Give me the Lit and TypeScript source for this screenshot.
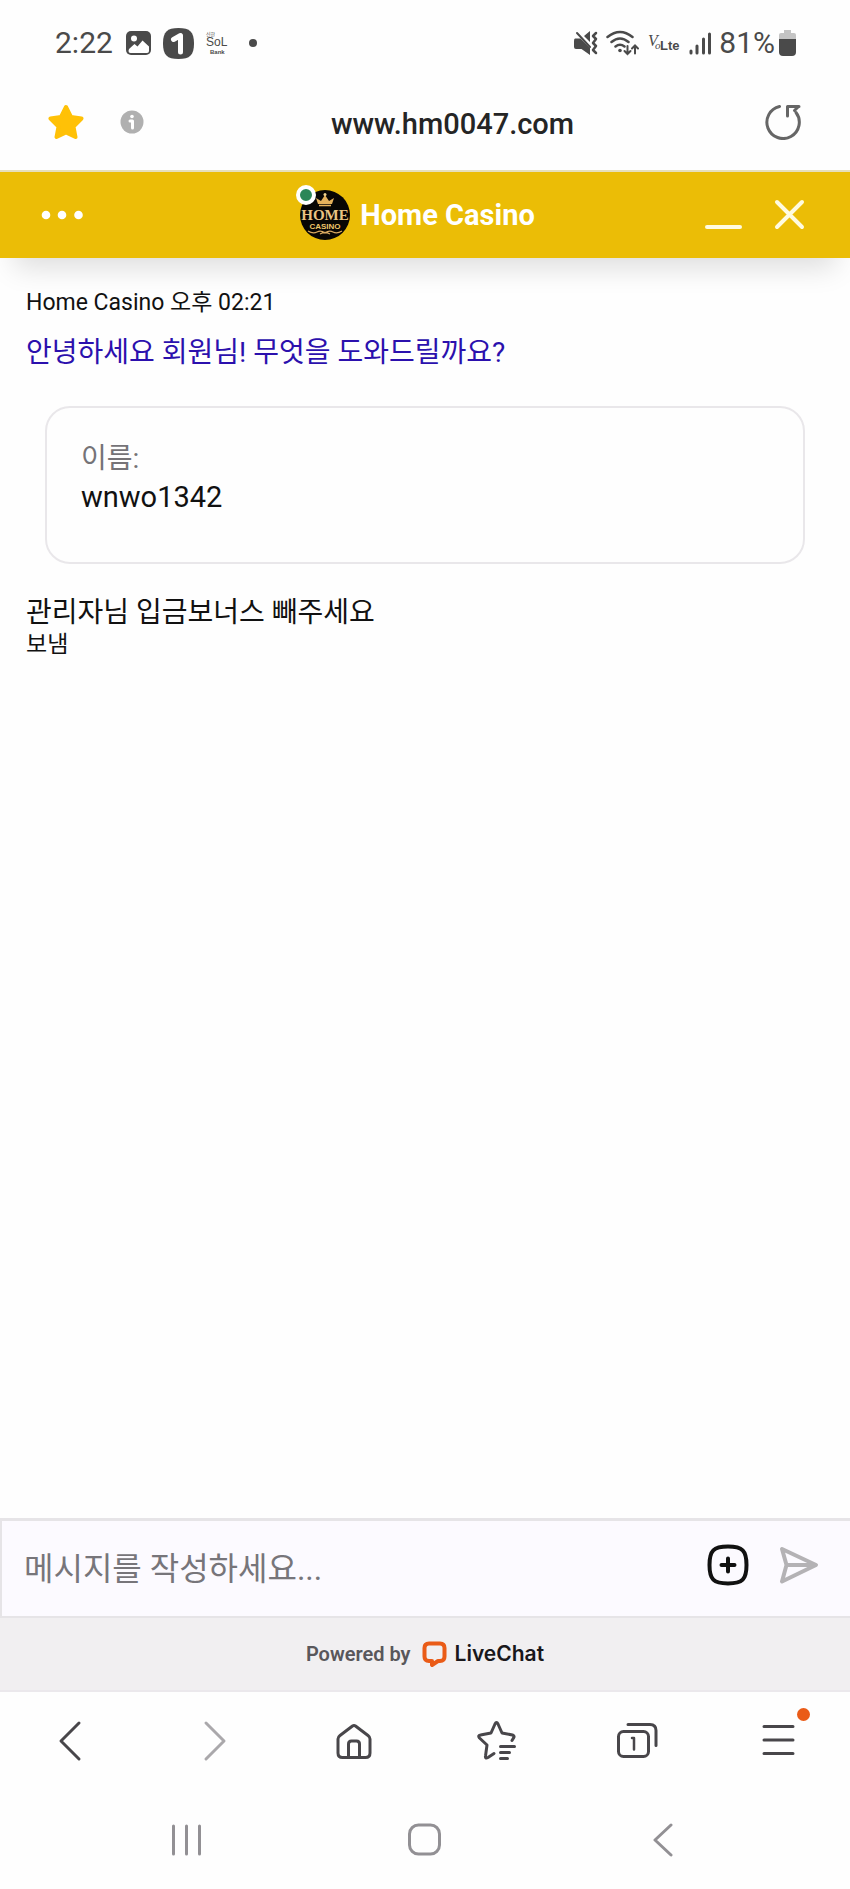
import { LitElement, html, css, svg } from "lit";
import { customElement, property, state } from "lit/decorators.js";

const sans = css`Roboto, "Noto Sans CJK KR", sans-serif`;

const control = css`
  button {
    display: flex;
    align-items: center;
    justify-content: center;
    margin: 0;
    padding: 0;
    border: 0;
    background: transparent;
    color: inherit;
    font: inherit;
    cursor: pointer;
  }
  svg {
    display: block;
    flex: none;
  }
`;

@customElement("phone-status")
class PhoneStatus extends LitElement {
  static styles = css`
    :host {
      display: flex;
      align-items: center;
      justify-content: space-between;
      height: 86px;
      padding: 0 54px 0 55px;
      color: #4a4a4a;
      font: 400 30px/40px ${sans};
    }
    .group {
      display: flex;
      align-items: center;
      gap: 11px;
    }
    .group.right {
      gap: 7px;
    }
    .battery {
      display: flex;
      align-items: center;
      gap: 4px;
    }
    svg {
      display: block;
      flex: none;
    }
    .sol {
      font: 400 12px "Liberation Sans", sans-serif;
    }
    .small {
      font: 700 6px "Liberation Sans", sans-serif;
    }
    .tiny {
      font: 400 5px "Noto Sans CJK KR", sans-serif;
    }
    .vo {
      font: italic 400 16px "Liberation Serif", serif;
    }
    .o {
      font: italic 400 11px "Liberation Serif", serif;
    }
    .lte {
      font: 700 13px "Liberation Sans", sans-serif;
    }
  `;

  @property() time = "";
  @property({ type: Number }) charge = 0;

  render() {
    return html`
      <div class="group">
        <span>${this.time}</span>
        <svg width="28" height="26" viewBox="0 0 28 26">
          <rect x="2" y="1" width="25" height="24" rx="5" fill="currentColor" />
          <circle cx="10" cy="8.500" r="3" fill="#fff" />
          <path d="M5 19l5.500-5 3 2.500 5-6 6.500 6v4.500q0 2-2 2H6.500q-2 0-2-2z" fill="#fff" />
        </svg>
        <svg width="31" height="31" viewBox="0 0 31 31">
          <path d="M15.500 0C27 0 31 4 31 15.500S27 31 15.500 31 0 27 0 15.500 4 0 15.500 0z" fill="currentColor" />
          <path d="M10.500 11.500L17.500 7.500V24" fill="none" stroke="#fff" stroke-width="5" stroke-linecap="round" stroke-linejoin="round" />
        </svg>
        <svg width="24" height="28" viewBox="0 0 24 28">
          <g fill="currentColor">
            <text class="tiny" x="1" y="7">신한</text>
            <text class="sol" x="1" y="17">SoL</text>
            <text class="small" x="5" y="25">Bank</text>
          </g>
        </svg>
        <svg width="20" height="10" viewBox="0 0 20 10">
          <circle cx="13" cy="5" r="4" fill="currentColor" />
        </svg>
      </div>
      <div class="group right">
        <svg width="25" height="26" viewBox="0 0 25 26" fill="none" stroke="currentColor" stroke-width="2" stroke-linecap="round">
          <path d="M1 8.500h5.500L16 18v7l-8.500-6H2q-2 0-2-2v-6q0-2.500 1-2.500zM10 6l6-5v11z" fill="currentColor" stroke="none" />
          <path d="M3 3l13 14" />
          <path d="M22 3l-3 3 3 3-3 4 3 3-3 4 3 3" stroke-width="2.500" stroke-linejoin="round" />
        </svg>
        <svg width="34" height="26" viewBox="0 0 34 26" fill="none" stroke="currentColor" stroke-width="2.500" stroke-linecap="round">
          <path d="M1.500 7q12.500-10 25 0M5.500 12q8.500-7 17 0M9.500 16.500q4.500-3.500 9 0" />
          <circle cx="14" cy="20.500" r="1.800" fill="currentColor" stroke="none" />
          <path d="M21.500 16v8M18.500 21l3 3 3-3M29 23.500v-8M26 18.500l3-3 3 3" stroke-width="2" />
        </svg>
        <svg width="34" height="30" viewBox="0 0 34 30">
          <g fill="currentColor">
            <text class="vo" x="1" y="18">V</text>
            <text class="o" x="8" y="21">o</text>
            <text class="lte" x="13" y="22">Lte</text>
          </g>
        </svg>
        <svg width="24" height="26" viewBox="0 0 24 26" stroke="currentColor" stroke-width="3" stroke-linecap="round">
          <path d="M3 21v2M9 16v7M15.500 9v14M21.500 4v19" />
        </svg>
        <span class="battery">
          <span>${this.charge}%</span>
          <svg width="17" height="26" viewBox="0 0 17 26">
            <path d="M5 0h7v3h3q2 0 2 2v4H0V5q0-2 2-2h3z" fill="#c4c4c4" />
            <path d="M0 9h17v13q0 4-4 4H4q-4 0-4-4z" fill="currentColor" />
          </svg>
        </span>
      </div>
    `;
  }
}

@customElement("address-bar")
class AddressBar extends LitElement {
  static styles = [
    control,
    css`
      :host {
        display: flex;
        align-items: center;
        height: 84px;
        padding: 0 45px 12px 48px;
        box-sizing: border-box;
      }
      .info {
        margin-left: 36px;
      }
      .reload {
        padding: 4px;
      }
      input {
        flex: 1;
        min-width: 0;
        padding: 4px 0 0;
        border: 0;
        outline: 0;
        background: transparent;
        color: #252525;
        font: 500 29px/40px ${sans};
        text-align: center;
      }
    `,
  ];

  @property() url = "";

  render() {
    return html`
      <button aria-label="Bookmark">
        <svg width="36" height="36" viewBox="0 0 36 36">
          <path d="M18 3l5 10 10.500 1.500-8 8L27.500 33 18 28.500 8.500 33l2-10.500-8-8L13 13z" fill="#ffc107" stroke="#ffc107" stroke-width="4" stroke-linejoin="round" />
        </svg>
      </button>
      <button class="info" aria-label="Site information">
        <svg width="24" height="24" viewBox="0 0 24 24">
          <circle cx="12" cy="12" r="11.500" fill="#b0b0b0" />
          <circle cx="12" cy="6.500" r="1.800" fill="#fff" />
          <path d="M10 11h2.500v7" fill="none" stroke="#fff" stroke-width="3" stroke-linecap="round" stroke-linejoin="round" />
        </svg>
      </button>
      <input type="text" aria-label="Address" .value=${this.url} />
      <button class="reload" aria-label="Reload">
        <svg width="36" height="36" viewBox="0 0 36 36" fill="none" stroke="#666" stroke-width="3" stroke-linecap="round" stroke-linejoin="round">
          <path d="M14.500 2.500A16.200 16.200 0 1 0 31 8.500" />
          <path d="M34 2.500H22.500V12M33 3l-3.500 3.500" />
        </svg>
      </button>
    `;
  }
}

@customElement("chat-header")
class ChatHeader extends LitElement {
  static styles = [
    control,
    css`
      :host {
        display: grid;
        grid-template-columns: 1fr auto 1fr;
        align-items: center;
        height: 88px;
        padding: 0 44px 0 39px;
        box-sizing: border-box;
        border-top: 2px solid #e6dfbc;
        background: #ebbd06;
        box-shadow: 0 24px 28px -14px rgba(0, 0, 0, 0.13);
        color: #fff;
      }
      .menu {
        justify-self: start;
      }
      .title {
        display: flex;
        align-items: center;
        gap: 10px;
        padding-right: 10px;
      }
      .avatar {
        position: relative;
      }
      .online {
        position: absolute;
        top: -5px;
        left: -4px;
        width: 12px;
        height: 12px;
        border: 4px solid #fff;
        border-radius: 50%;
        background: #2b8658;
      }
      h1 {
        margin: 0;
        font: 700 29px/36px ${sans};
      }
      .home {
        font: 700 15px "Liberation Serif", serif;
      }
      .casino {
        font: 700 8px "Liberation Sans", sans-serif;
      }
      .actions {
        display: flex;
        justify-content: flex-end;
        gap: 30px;
      }
    `,
  ];

  @property() name = "";

  render() {
    return html`
      <button class="menu" aria-label="Menu">
        <svg width="46" height="36" viewBox="0 0 46 36" fill="#fff">
          <circle cx="7" cy="18" r="4.300" />
          <circle cx="23" cy="18" r="4.300" />
          <circle cx="39.500" cy="18" r="4.300" />
        </svg>
      </button>
      <div class="title">
        <div class="avatar">
          <svg width="50" height="50" viewBox="0 0 50 50">
            <circle cx="25" cy="25" r="25" fill="#080604" />
            <path d="M18 14l-2-6 5 3 4-6 4 6 5-3-2 6z" fill="#e5b15c" />
            <circle cx="25" cy="4.500" r="1.500" fill="#f3d48d" />
            <path d="M19 15.500h12" stroke="#e5b15c" stroke-width="1.500" />
            <g text-anchor="middle">
              <text class="home" x="25" y="30" fill="#e9c383">HOME</text>
              <text class="casino" x="25" y="39" fill="#efc66a">CASINO</text>
            </g>
            <path d="M8 41q5 3 9 1t8 1q4-3 8-1t9-1M20 44q5-3 10 0" fill="none" stroke="#d9a960" stroke-width="1.300" />
          </svg>
          <span class="online"></span>
        </div>
        <h1>${this.name}</h1>
      </div>
      <div class="actions">
        <button aria-label="Minimize">
          <svg width="38" height="36" viewBox="0 0 38 36" stroke="#fffbe0" stroke-width="4" stroke-linecap="round">
            <path d="M3 30h33" />
          </svg>
        </button>
        <button aria-label="Close">
          <svg width="34" height="36" viewBox="0 0 34 36" stroke="#fffbe0" stroke-width="4" stroke-linecap="round">
            <path d="M5 5l25 25M30 5L5 30" />
          </svg>
        </button>
      </div>
    `;
  }
}

@customElement("chat-composer")
class ChatComposer extends LitElement {
  static styles = [
    control,
    css`
      form {
        display: flex;
        align-items: center;
        gap: 29px;
        height: 100px;
        padding: 0 30px 0 22px;
        box-sizing: border-box;
        border: solid #e6e4e7;
        border-width: 3px 0 2px 2px;
        background: #fcfaff;
      }
      input {
        flex: 1;
        min-width: 0;
        padding: 0;
        border: 0;
        outline: 0;
        background: transparent;
        color: #111;
        font: 400 32px/44px ${sans};
      }
      input::placeholder {
        color: #77757a;
        opacity: 1;
      }
      button svg {
        margin-bottom: 8px;
      }
    `,
  ];

  @state() private text = "";

  onInput(e: InputEvent) {
    this.text = (e.target as HTMLInputElement).value;
  }

  onSubmit(e: Event) {
    e.preventDefault();
    if (this.text === "") {
      return;
    }
    this.dispatchEvent(
      new CustomEvent("send", { detail: this.text, bubbles: true, composed: true })
    );
    this.text = "";
  }

  render() {
    return html`
      <form @submit=${this.onSubmit}>
        <input
          type="text"
          aria-label="메시지"
          placeholder="메시지를 작성하세요..."
          .value=${this.text}
          @input=${this.onInput}
        />
        <button type="button" aria-label="Attach">
          <svg width="42" height="42" viewBox="0 0 42 42" fill="none" stroke="#111" stroke-width="4" stroke-linecap="round">
            <path d="M21 2.500C35.500 2.500 39.500 6.500 39.500 21S35.500 39.500 21 39.500 2.500 35.500 2.500 21 6.500 2.500 21 2.500z" />
            <path d="M21 14.500v13M14.500 21h13" />
          </svg>
        </button>
        <button aria-label="Send">
          <svg width="42" height="42" viewBox="0 0 42 42" fill="none" stroke="#b4b2b5" stroke-width="4" stroke-linecap="round" stroke-linejoin="round">
            <path d="M4 5L38 21 4 37.500 8.500 21zM8.500 21H36" />
          </svg>
        </button>
      </form>
    `;
  }
}

const toolbar = [
  { label: "Back", icon: svg`<path d="M31 5L13 23l18 18" />` },
  { label: "Forward", icon: svg`<path d="M17 5l18 18-18 18" />`, dim: true },
  {
    label: "Home",
    icon: svg`<path d="M7 21q0-2 2-3.500L21.500 8q1.500-1 3 0L37 17.500q2 1.500 2 3.500v14q0 4.500-4.500 4.500h-23Q7 39.500 7 35z" /><path d="M17.500 39V26q0-3 3-3h5q3 0 3 3v13" />`,
  },
  {
    label: "Bookmarks",
    icon: svg`<path d="M21 35.500l-6 4q-3 1.500-2.500-1.500l1.500-11-7.500-7q-2-2.500 1-3l10.500-2L22 6q1.500-3 3 0l4 9 10.500 2q2.500 1 1 3l-1.500 2.500M27.500 28.500h14M27.500 34.500h9M27.500 40.500h7" />`,
  },
  {
    label: "Tabs",
    icon: svg`<rect x="4.500" y="13.500" width="30" height="25" rx="5" /><path d="M14 6.500h22q6 0 6 6v15" /><path d="M18 20h2v11.500" stroke-width="2.500" />`,
  },
  { label: "Menu", icon: svg`<path d="M8 8.500h29M8 22h29M8 35.500h29" />`, badge: true },
];

@customElement("browser-toolbar")
class BrowserToolbar extends LitElement {
  static styles = [
    control,
    css`
      :host {
        display: block;
        color: #48464a;
      }
      nav {
        display: grid;
        grid-template-columns: repeat(6, 1fr);
        align-items: center;
        height: 97px;
      }
      nav button {
        height: 97px;
      }
      .icon {
        position: relative;
      }
      .dim {
        color: #aaa8ab;
      }
      .badge {
        position: absolute;
        top: -10px;
        right: -8px;
        width: 13px;
        height: 13px;
        border-radius: 50%;
        background: #ea5b17;
      }
      .system {
        grid-template-columns: repeat(3, 1fr);
        height: 100px;
        padding: 0 68px;
        color: #929094;
      }
    `,
  ];

  render() {
    return html`
      <nav aria-label="Browser">
        ${toolbar.map(
          (item) => html`<button class=${item.dim ? "dim" : ""} aria-label=${item.label}>
            <span class="icon">
              <svg width="46" height="46" viewBox="0 0 46 46" fill="none" stroke="currentColor" stroke-width="3" stroke-linecap="round" stroke-linejoin="round">
                ${item.icon}
              </svg>
              ${item.badge ? html`<span class="badge"></span>` : ""}
            </span>
          </button>`
        )}
      </nav>
      <nav class="system" aria-label="System">
        <button aria-label="Recents">
          <svg width="36" height="36" viewBox="0 0 36 36" stroke="currentColor" stroke-width="3" stroke-linecap="round">
            <path d="M4.500 5v28M17.500 5v28M30.500 5v28" />
          </svg>
        </button>
        <button aria-label="Home screen">
          <svg width="36" height="36" viewBox="0 0 36 36" fill="none" stroke="currentColor" stroke-width="3">
            <rect x="2.500" y="4" width="30" height="29" rx="9" />
          </svg>
        </button>
        <button aria-label="Go back">
          <svg width="36" height="36" viewBox="0 0 36 36" fill="none" stroke="currentColor" stroke-width="3" stroke-linecap="round" stroke-linejoin="round">
            <path d="M26 4L10 19l16 15" />
          </svg>
        </button>
      </nav>
    `;
  }
}

@customElement("app-root")
class AppRoot extends LitElement {
  static styles = css`
    :host {
      display: flex;
      flex-direction: column;
      min-height: 100vh;
      background: #fefefe;
      color: #111;
      font: 400 28px/38px ${sans};
    }
    main {
      flex: 1;
      padding: 28px 26px;
    }
    p {
      margin: 0;
    }
    .meta {
      font-size: 23px;
      line-height: 34px;
    }
    .greeting {
      margin-top: 14px;
      color: #2b10ad;
    }
    .card {
      margin: 34px 19px 30px;
      padding: 32px 34px 46px;
      border: 2px solid #e9e7ea;
      border-radius: 25px;
    }
    dl,
    dd {
      margin: 0;
    }
    dt {
      color: #757377;
    }
    dd {
      font-size: 29px;
    }
    .sent {
      font-size: 23px;
      line-height: 26px;
    }
    footer {
      display: flex;
      align-items: center;
      justify-content: center;
      gap: 11px;
      height: 74px;
      box-sizing: border-box;
      border-bottom: 2px solid #ebe8ec;
      background: #f1eff1;
      color: #59575b;
      font: 600 20px/28px ${sans};
    }
    footer a {
      display: flex;
      align-items: center;
      gap: 8px;
      color: #19171b;
      font: 600 21px/28px Inter, sans-serif;
      text-decoration: none;
    }
  `;

  @state() private messages = ["관리자님 입금보너스 빼주세요"];

  onSend(e: CustomEvent) {
    this.messages = [...this.messages, e.detail];
  }

  render() {
    return html`
      <phone-status time="2:22" charge="81"></phone-status>
      <address-bar url="www.hm0047.com"></address-bar>
      <chat-header name="Home Casino"></chat-header>
      <main>
        <p class="meta">Home Casino 오후 02:21</p>
        <p class="greeting">안녕하세요 회원님! 무엇을 도와드릴까요?</p>
        <dl class="card">
          <dt>이름:</dt>
          <dd>wnwo1342</dd>
        </dl>
        ${this.messages.map((message) => html`<p>${message}</p>`)}
        <p class="sent">보냄</p>
      </main>
      <chat-composer @send=${this.onSend}></chat-composer>
      <footer>
        <span>Powered by</span>
        <a href="#livechat">
          <svg width="25" height="26" viewBox="0 0 25 26">
            <path d="M7 2.500h11q4.500 0 4.500 4.500v8.500q0 4.500-4.500 4.500h-2l-6 4v-4H7q-4.500 0-4.500-4.500V7q0-4.500 4.500-4.500z" fill="none" stroke="#ea5b17" stroke-width="4" stroke-linejoin="round" />
          </svg>
          LiveChat
        </a>
      </footer>
      <browser-toolbar></browser-toolbar>
    `;
  }
}

export default AppRoot;
